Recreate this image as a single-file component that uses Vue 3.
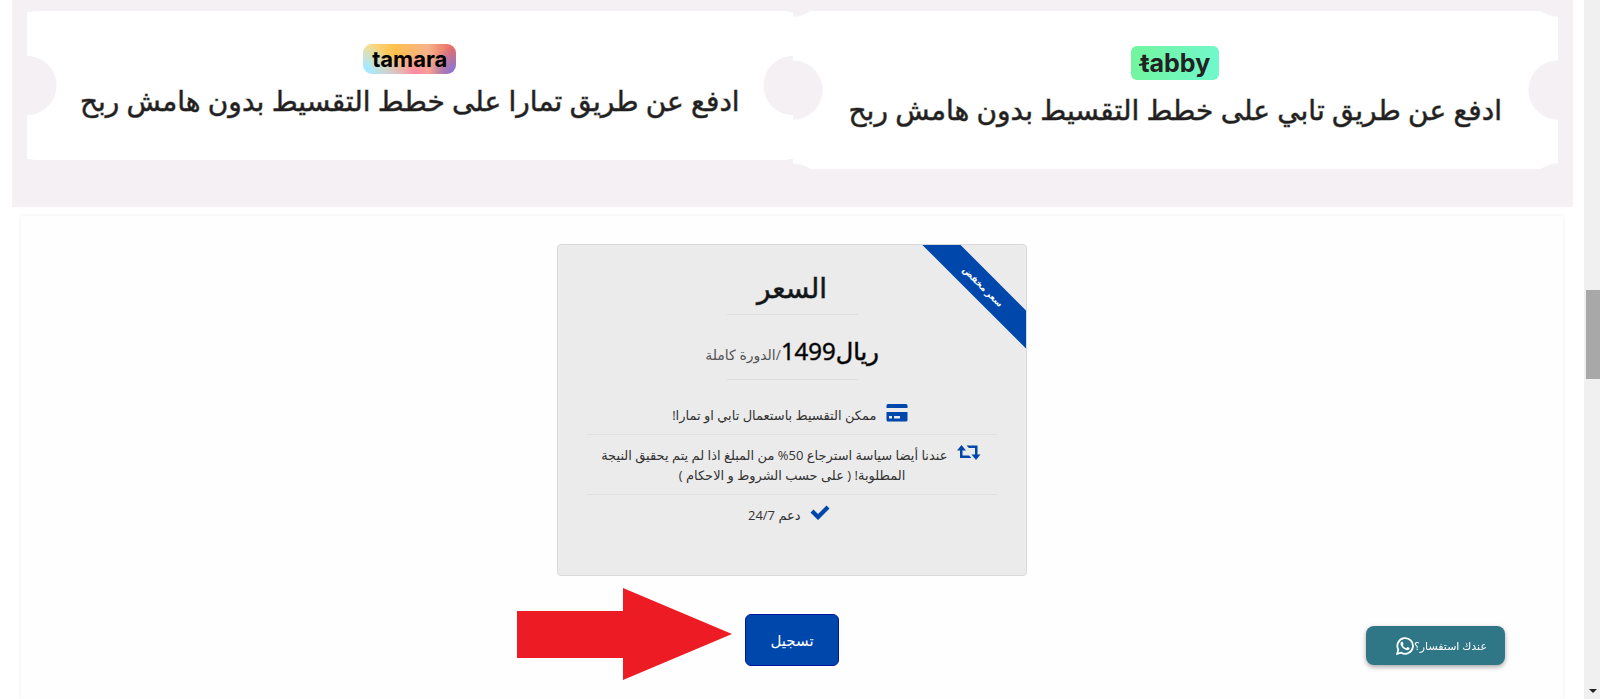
<template>
  <div class="page" dir="rtl">
    <main class="content">
      <section class="plans">
        <article v-for="plan in plans" :key="plan.id" class="ticket" :class="plan.id">
          <span class="logo" :class="plan.id + '-logo'" dir="ltr">{{ plan.id }}</span>
          <h2 class="ticket-title">{{ plan.title }}</h2>
        </article>
      </section>

      <section class="pricing">
        <div class="price-card">
          <div class="ribbon">سعر مخفض</div>
          <h3 class="card-title">السعر</h3>
          <p class="price"><strong>ريال1499</strong>/الدورة كاملة</p>
          <ul class="features">
            <li>
              <svg class="icon" viewBox="0 0 24 18" aria-hidden="true">
                <path d="M2 0h18a1.500 1.500 0 0 1 1.500 1.500V4H0.500V1.500A1.500 1.500 0 0 1 2 0z" />
                <path fill-rule="evenodd" d="M0.500 8h21v8a1.500 1.500 0 0 1-1.500 1.500H2A1.500 1.500 0 0 1 .5 16zM3 12v2.500h3V12zM8 12v2.500h6V12z" />
              </svg>
              ممكن التقسيط باستعمال تابي او تمارا!
            </li>
            <li>
              <svg class="icon" viewBox="0 0 24 18" aria-hidden="true">
                <path d="M4.500 1 0 6.500h3V14h11.500l-2.500-2.500H5.500V6.500H9zM9.500 1.500 12 4h6v6.500h-3.500L19 16l4.500-5.500h-3v-9z" />
              </svg>
              عندنا أيضا سياسة استرجاع 50% من المبلغ اذا لم يتم يحقيق النيجة المطلوبة! ( على حسب الشروط و الاحكام )
            </li>
            <li>
              <svg class="icon" viewBox="0 0 24 18" aria-hidden="true">
                <path d="M.5 8.500 3.500 5.500l4.500 4.500L16.500 1.500 19.500 4.500 8 16z" />
              </svg>
              دعم 24/7
            </li>
          </ul>
        </div>

        <div class="action">
          <button type="button" class="register">تسجيل</button>
          <svg class="pointer" viewBox="0 0 216 94" aria-hidden="true">
            <path d="M0 24h106V1l109 46L106 93V71H0z" />
          </svg>
        </div>
      </section>
    </main>

    <button type="button" class="chat">
      عندك استفسار؟
      <svg viewBox="0 0 24 24" aria-hidden="true">
        <path d="M17.472 14.382c-.297-.149-1.758-.867-2.030-.967-.273-.099-.471-.148-.670.150-.197.297-.767.966-.940 1.164-.173.199-.347.223-.644.075-.297-.150-1.255-.463-2.390-1.475-.883-.788-1.480-1.761-1.653-2.059-.173-.297-.018-.458.130-.606.134-.133.298-.347.446-.520.149-.174.198-.298.298-.497.099-.198.050-.371-.025-.520-.075-.149-.669-1.612-.916-2.207-.242-.579-.487-.500-.669-.510-.173-.008-.371-.010-.570-.010-.198 0-.520.074-.792.372-.272.297-1.040 1.016-1.040 2.479 0 1.462 1.065 2.875 1.213 3.074.149.198 2.096 3.200 5.077 4.487.709.306 1.262.489 1.694.625.712.227 1.360.195 1.871.118.571-.085 1.758-.719 2.006-1.413.248-.694.248-1.289.173-1.413-.074-.124-.272-.198-.570-.347z" />
        <path class="bubble" d="M1.600 22.400l1.500-5.500A10.400 10.400 0 1 1 7 20.900z" />
      </svg>
    </button>

    <div class="scrollbar" aria-hidden="true">
      <div class="thumb"></div>
      <div class="arrow-down"></div>
    </div>
  </div>
</template>

<script setup>
const plans = [
  { id: 'tabby', title: 'ادفع عن طريق تابي على خطط التقسيط بدون هامش ربح' },
  { id: 'tamara', title: 'ادفع عن طريق تمارا على خطط التقسيط بدون هامش ربح' }
];
</script>

<style>
body {
  margin: 0;
  overflow: hidden;
}
</style>

<style scoped>
.page {
  display: flex;
  flex-direction: row-reverse;
  height: 100vh;
  font-family: 'Open Sans', 'DejaVu Sans', sans-serif;
  color: #212529;
  background: #fff;
}

.content {
  flex: 1;
  display: flex;
  flex-direction: column;
  padding: 0 11px 0 12px;
}

.plans {
  display: flex;
  align-items: flex-start;
  padding: 11px 15px 38px;
  background: #f4f0f4;
}

.ticket {
  flex: 1;
  display: flex;
  flex-direction: column;
  align-items: center;
  box-sizing: border-box;
  background:
    radial-gradient(circle at 0 50%, #f4f0f4 29px, transparent 30px) left center / 50% 103px repeat-y,
    radial-gradient(circle at 100% 50%, #f4f0f4 29px, transparent 30px) right center / 50% 103px repeat-y,
    #fff;
}

.tabby {
  padding: 35px 0 37px;
}

.tamara {
  padding: 33px 0 37px;
}

.logo {
  display: flex;
  align-items: center;
  justify-content: center;
  font-family: Inter, sans-serif;
  font-weight: 700;
}

.tabby-logo {
  position: relative;
  width: 88px;
  height: 34px;
  margin-bottom: 7px;
  border-radius: 6px;
  font-size: 25px;
  line-height: 30px;
  color: #222;
  background: linear-gradient(100deg, #72f59d, #70f8cd);
}

/* second bar across the t */
.tabby-logo::before {
  content: '';
  position: absolute;
  left: 8px;
  top: 17px;
  width: 10px;
  height: 2px;
  background: #222;
  transform: rotate(-12deg);
}

.tamara-logo {
  width: 93px;
  height: 30px;
  margin-bottom: 4px;
  border-radius: 9px;
  font-size: 22px;
  line-height: 30px;
  color: #000;
  background:
    radial-gradient(circle at 0 100%, #a8e8ff 8px, transparent 32px),
    radial-gradient(circle at 30% 115%, #cdc8ee, transparent 24px),
    radial-gradient(circle at 55% 110%, #ff7fae, transparent 24px),
    radial-gradient(circle at 100% 100%, #9175cc 6px, transparent 28px),
    linear-gradient(90deg, #ffe08a, #ffbf4d 35%, #f6b28a 70%, #ea6c65 95%);
}

/* the light stroke gives the Arabic headings a medium weight */
.ticket-title {
  margin: 0;
  font-size: 28px;
  line-height: 45px;
  font-weight: 400;
  color: #231f20;
  white-space: nowrap;
  -webkit-text-stroke: 1px rgba(35, 31, 32, 0.5);
}

.pricing {
  flex: 1;
  display: flex;
  flex-direction: column;
  align-items: center;
  margin: 9px 10px 0 9px;
  padding-top: 28px;
  background: #fefefe;
  box-shadow: 0 0 4px rgba(0, 0, 0, 0.07);
}

.price-card {
  position: relative;
  overflow: hidden;
  box-sizing: border-box;
  width: 470px;
  max-width: 100%;
  padding: 18px 29px 41px;
  border: 1px solid #d9d9d9;
  border-radius: 4px;
  background: #ebebeb;
  text-align: center;
}

.ribbon {
  position: absolute;
  top: 28px;
  right: -44px;
  width: 174px;
  font-size: 9px;
  line-height: 27px;
  font-weight: 700;
  color: #fff;
  background: #0047ab;
  transform: rotate(45deg);
}

.card-title,
.price {
  width: 131px;
  margin: 0 auto;
  border-bottom: 1px solid #dedede;
  white-space: nowrap;
}

.card-title {
  padding-bottom: 2px;
  font-size: 28px;
  line-height: 49px;
  font-weight: 400;
  color: #111518;
  -webkit-text-stroke: 1px rgba(17, 21, 24, 0.5);
}

.price {
  display: flex;
  justify-content: center;
  align-items: baseline;
  padding-top: 11px;
  font-size: 14px;
  line-height: 49px;
  color: #555;
}

.price strong {
  font-size: 24px;
  font-weight: 400;
  color: #000;
  -webkit-text-stroke: 1px rgba(0, 0, 0, 0.5);
}

.features {
  margin: 15px 0 0;
  padding: 0;
  list-style: none;
  font-size: 13px;
  line-height: 20px;
  color: #333;
}

.features li {
  padding: 9px 0;
}

.features li + li {
  border-top: 1px solid #e1e1e1;
}

.icon {
  width: 24px;
  height: 18px;
  margin: 0 2px 0 6px;
  vertical-align: -2px;
  fill: #0047ab;
}

.action {
  position: relative;
  margin-top: 38px;
}

.register {
  display: block;
  width: 94px;
  height: 52px;
  border: 1px solid #0014a8;
  border-radius: 6px;
  font-family: inherit;
  font-size: 15px;
  color: #fff;
  background: #0047ab;
}

.pointer {
  position: absolute;
  right: 106px;
  top: -27px;
  width: 216px;
  height: 94px;
  fill: #ed1c24;
}

.chat {
  position: fixed;
  right: 95px;
  bottom: 34px;
  display: flex;
  align-items: center;
  width: 139px;
  height: 39px;
  padding: 0 18px;
  border: 0;
  border-radius: 8px;
  font-family: inherit;
  font-size: 11px;
  white-space: nowrap;
  color: #fff;
  background: #2f7687;
  box-shadow: 0 2px 5px rgba(0, 0, 0, 0.35);
}

.chat svg {
  flex: none;
  width: 18px;
  height: 18px;
  fill: #fff;
}

.chat .bubble {
  fill: none;
  stroke: #fff;
  stroke-width: 2.4;
}

.scrollbar {
  position: relative;
  width: 16px;
  background: #f0f0f0;
}

.thumb {
  height: 89px;
  margin: 290px 0 0 2px;
  background: #a8a8a8;
}

.arrow-down {
  position: absolute;
  left: 5px;
  bottom: 6px;
  border: 4px solid transparent;
  border-top-color: #222;
  border-bottom: 0;
}
</style>
